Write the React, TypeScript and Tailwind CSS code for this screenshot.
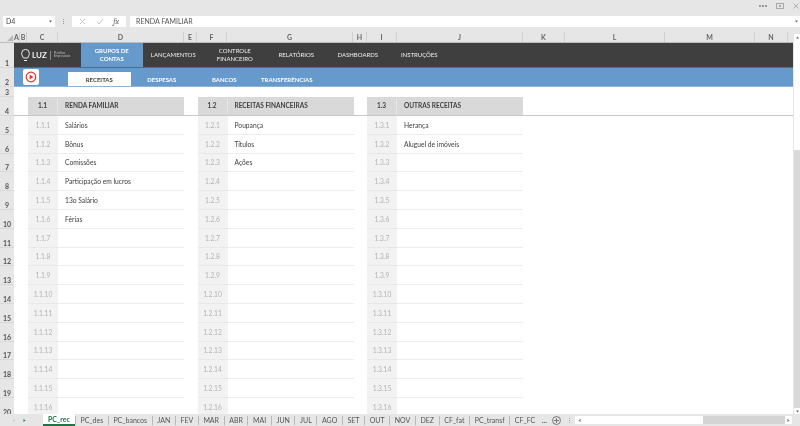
import React from "react";

const font = { fontFamily: "Lato, 'Open Sans', sans-serif" };

const cols: [string, number][] = [
  ["A", 6], ["B", 7], ["C", 31], ["D", 126], ["E", 13], ["F", 30], ["G", 126], ["H", 14],
  ["I", 30], ["J", 126], ["K", 42], ["L", 100], ["M", 90], ["N", 33],
];

const rowHeads: [string, string][] = [
  ["1", "h-[25px]"], ["2", "h-[19px]"], ["3", "h-[10px]"], ["4", "h-[19px]"],
  ...Array.from({ length: 16 }, (_, i): [string, string] => [String(i + 5), "h-[18.8px]"]),
];

const tables = [
  { id: "1.1", title: "RENDA FAMILIAR", items: ["Salários", "Bônus", "Comissões", "Participação em lucros", "13o Salário", "Férias"] },
  { id: "1.2", title: "RECEITAS FINANCEIRAS", items: ["Poupança", "Títulos", "Ações"] },
  { id: "1.3", title: "OUTRAS RECEITAS", items: ["Herança", "Aluguel de imóveis"] },
];

const tabs = ["PC_rec", "PC_des", "PC_bancos", "JAN", "FEV", "MAR", "ABR", "MAI", "JUN", "JUL", "AGO", "SET", "OUT", "NOV", "DEZ", "CF_fat", "PC_transf", "CF_FC"];

function Arrow({ dir }: { dir: "up" | "down" | "left" | "right" }) {
  const d = { up: "M1 3.5L2.5 1.5 4 3.5z", down: "M1 1.5L2.5 3.5 4 1.5z", left: "M3.5 1L1.5 2.5 3.5 4z", right: "M1.5 1L3.5 2.5 1.5 4z" }[dir];
  return (
    <svg width="5" height="5" viewBox="0 0 5 5"><path d={d} fill="#666" /></svg>
  );
}

function Table({ id, title, items }: { id: string; title: string; items: string[] }) {
  return (
    <div className="w-[156px] shrink-0">
      <div className="flex h-[19px] bg-[#d9d9d9] text-[6.5px] font-bold text-[#404040] border-b border-[#c8c8c8]">
        <div className="w-[30px] flex items-center justify-center border-r border-[#e6e6e6]">{id}</div>
        <div className="flex-1 flex items-center pl-[7px]">{title}</div>
      </div>
      {Array.from({ length: 16 }, (_, i) => (
        <div key={i} className="flex h-[18.8px] text-[6.7px]">
          <div className="w-[30px] flex items-center justify-center bg-[#f2f2f2] text-[#b4b4b4] border-b border-[#e8e8e8]">{`${id}.${i + 1}`}</div>
          <div className="flex-1 flex items-center pl-[7px] text-[#404040] border-b border-[#ededed]">{items[i] ?? ""}</div>
        </div>
      ))}
    </div>
  );
}

export default function App() {
  return (
    <div className="w-[800px] h-[426px] overflow-hidden flex flex-col bg-[#e6e6e6] text-[#444] blur-[0.4px]" style={font}>
      {/* title strip */}
      <div className="h-[16px] shrink-0 flex items-center justify-end gap-[9px] pr-[1px] pb-[5px]">
        <span className="flex gap-px">
          <span className="w-[2px] h-[2px] bg-[#9a9a9a]" />
          <span className="w-[2px] h-[2px] bg-[#9a9a9a]" />
          <span className="w-[2px] h-[2px] bg-[#9a9a9a]" />
        </span>
        <svg width="8" height="6" viewBox="0 0 8 6"><rect x="0.5" y="0.5" width="7" height="5" fill="none" stroke="#a8a8a8" /><rect x="3" y="2" width="2" height="2" fill="#a8a8a8" /></svg>
        <svg width="6" height="6" viewBox="0 0 6 6"><path d="M.5 .5l5 5M5.5 .5l-5 5" stroke="#b0b0b0" /></svg>
      </div>

      {/* formula bar */}
      <div className="h-[11px] shrink-0 flex items-stretch text-[7px]">
        <div className="ml-[3px] w-[52px] bg-white flex items-center justify-between pl-[3px] pr-[2px]">
          <span>D4</span>
          <Arrow dir="down" />
        </div>
        <div className="w-[17px] flex flex-col items-center justify-center gap-px">
          <span className="w-px h-px bg-[#999]" />
          <span className="w-px h-px bg-[#999]" />
          <span className="w-px h-px bg-[#999]" />
        </div>
        <div className="w-[54px] bg-white flex items-center justify-around px-[2px]">
          <svg width="7" height="7" viewBox="0 0 7 7"><path d="M1 1l5 5M6 1l-5 5" stroke="#c4c4c4" /></svg>
          <svg width="8" height="7" viewBox="0 0 8 7"><path d="M1 4l2 2 4-5" stroke="#c4c4c4" fill="none" /></svg>
          <span className="italic font-serif text-[#666] text-[8px]">fx</span>
        </div>
        <div className="ml-[4px] flex-1 bg-white flex items-center justify-between pl-[6px] pr-[1px] text-[#555]">
          <span>RENDA FAMILIAR</span>
          <Arrow dir="down" />
        </div>
      </div>
      <div className="h-[5px] shrink-0" />

      {/* grid + vertical scrollbar */}
      <div className="flex-1 min-h-0 flex">
        <div className="w-[792.5px] shrink-0 flex flex-col min-h-0">
          {/* column headers */}
          <div className="h-[11px] shrink-0 flex text-[7px] text-[#666] border-b border-[#bdbdbd]">
            <div className="w-[14px] shrink-0 relative">
              <div className="absolute right-[1px] bottom-[1px] w-0 h-0 border-l-[6px] border-l-transparent border-b-[6px] border-b-[#b8b8b8]" />
            </div>
            {cols.map(([c, w]) => (
              <div key={c} style={{ width: w }} className="shrink-0 flex items-center justify-center border-r border-[#d0d0d0] font-bold">{c}</div>
            ))}
          </div>

          {/* body */}
          <div className="flex-1 min-h-0 flex overflow-hidden">
            <div className="w-[14px] shrink-0 flex flex-col overflow-hidden">
              {rowHeads.map(([n, h]) => (
                <div key={n} className={`${h} shrink-0 flex items-end justify-center text-[7px] leading-[8px] font-bold text-[#555] border-b border-[#d8d8d8]`}>{n}</div>
              ))}
            </div>

            <div className="flex-1 min-w-0 bg-white flex flex-col overflow-hidden">
              <div className="h-[25px] shrink-0 bg-[#3f3f3f] flex text-[6px] text-[#f0f0f0] border-b border-[#666]">
                <div className="w-[67px] shrink-0 flex items-center pl-[7px]">
                  <svg className="shrink-0" width="9" height="14" viewBox="0 0 9 14" fill="none" stroke="#eeeeee" strokeWidth="1"><path d="M2.5 10C1.5 8.5 .7 7.5 .7 5.2a3.8 3.8 0 0 1 7.6 0c0 2.3-.8 3.3-1.8 4.8z" /><path d="M3 12.5h3" /></svg>
                  <span className="ml-[2px] text-[8px] font-bold leading-none">LUZ</span>
                  <span className="w-px h-[9px] bg-[#888] mx-[3px] shrink-0" />
                  <span className="text-[3px] leading-[3.5px] text-[#bbb]">Planilhas<br />Empresariais</span>
                </div>
                {["GRUPOS DE CONTAS", "LANÇAMENTOS", "CONTROLE FINANCEIRO", "RELATÓRIOS", "DASHBOARDS", "INSTRUÇÕES"].map((t, i) => (
                  <div key={t} className={`w-[61.5px] shrink-0 flex items-center justify-center text-center leading-[8.5px] px-[8px] ${i === 0 ? "bg-[#6699cc] text-white font-bold" : ""}`}>{t}</div>
                ))}
              </div>

              <div className="h-[19px] shrink-0 bg-[#6699cc] flex items-end text-[6px] font-bold text-white border-b border-[#8db3d9]">
                <div className="w-[54px] shrink-0 h-full flex items-center pl-[8.5px]">
                  <div className="w-[16px] h-[16px] bg-white rounded-[2px] flex items-center justify-center">
                    <svg width="12" height="12" viewBox="0 0 12 12"><circle cx="6" cy="6" r="4.8" fill="none" stroke="#e8312a" strokeWidth="1.2" /><path d="M4.6 3.6v4.8L8.4 6z" fill="#e8312a" /></svg>
                  </div>
                </div>
                {["RECEITAS", "DESPESAS", "BANCOS", "TRANSFERÊNCIAS"].map((t, i) => (
                  <div key={t} className={`w-[62.5px] shrink-0 h-[14px] flex items-center justify-center ${i === 0 ? "bg-white text-[#404040]" : ""}`}>{t}</div>
                ))}
              </div>

              <div className="h-[10px] shrink-0" />

              <div className="flex gap-[13.5px] pl-[14px] relative">
                <div className="absolute left-0 right-0 top-[18px] h-px bg-[#c8c8c8]" />
                {tables.map((t) => (
                  <Table key={t.id} {...t} />
                ))}
              </div>
            </div>
          </div>
        </div>

        {/* vertical scrollbar */}
        <div className="ml-[1.5px] w-[6px] shrink-0 flex flex-col pt-[2px] bg-[#e6e6e6]">
          <div className="h-[6px] bg-white flex items-center justify-center"><Arrow dir="up" /></div>
          <div className="h-[110px] bg-white" />
          <div className="flex-1 bg-[#d9d9d9]" />
          <div className="h-[6px] bg-white flex items-center justify-center"><Arrow dir="down" /></div>
        </div>
      </div>

      {/* tab strip */}
      <div className="h-[12px] shrink-0 flex items-center text-[7px] text-[#555] bg-[#e6e6e6]">
        <div className="w-[43px] shrink-0 flex items-center justify-start gap-[6px] pl-[11px]">
          <svg width="5" height="5" viewBox="0 0 5 5"><path d="M3.5 1L1.5 2.5 3.5 4z" fill="#c4c4c4" /></svg>
          <svg width="5" height="5" viewBox="0 0 5 5"><path d="M1.5 1L3.5 2.5 1.5 4z" fill="#217346" /></svg>
        </div>
        <div className="flex h-full items-center">
          {tabs.map((t, i) => (
            <div
              key={t}
              className={
                i === 0
                  ? "h-full px-[5px] bg-white text-[#217346] font-bold border-b-2 border-[#217346] flex items-center"
                  : "h-[9px] px-[4.6px] border-l border-[#b8b8b8] flex items-center"
              }
            >
              {t}
            </div>
          ))}
        </div>
        <span className="text-[#217346] font-bold pl-[2px] leading-none">...</span>
        <svg className="ml-[5px] shrink-0" width="9" height="9" viewBox="0 0 9 9" fill="none" stroke="#777"><circle cx="4.5" cy="4.5" r="4" /><path d="M4.5 2v5M2 4.5h5" /></svg>
        <span className="ml-[8px] flex flex-col gap-px">
          <span className="w-px h-px bg-[#aaa]" />
          <span className="w-px h-px bg-[#aaa]" />
          <span className="w-px h-px bg-[#aaa]" />
        </span>
        <div className="ml-auto mr-[8px] w-[217px] h-[8px] shrink-0 bg-[#d4d4d4] flex items-center">
          <div className="w-[8px] h-full bg-white flex items-center justify-center"><Arrow dir="left" /></div>
          <div className="w-[120px] h-full bg-white" />
          <div className="flex-1" />
          <div className="w-[7px] h-full bg-white flex items-center justify-center"><Arrow dir="right" /></div>
        </div>
      </div>
    </div>
  );
}
